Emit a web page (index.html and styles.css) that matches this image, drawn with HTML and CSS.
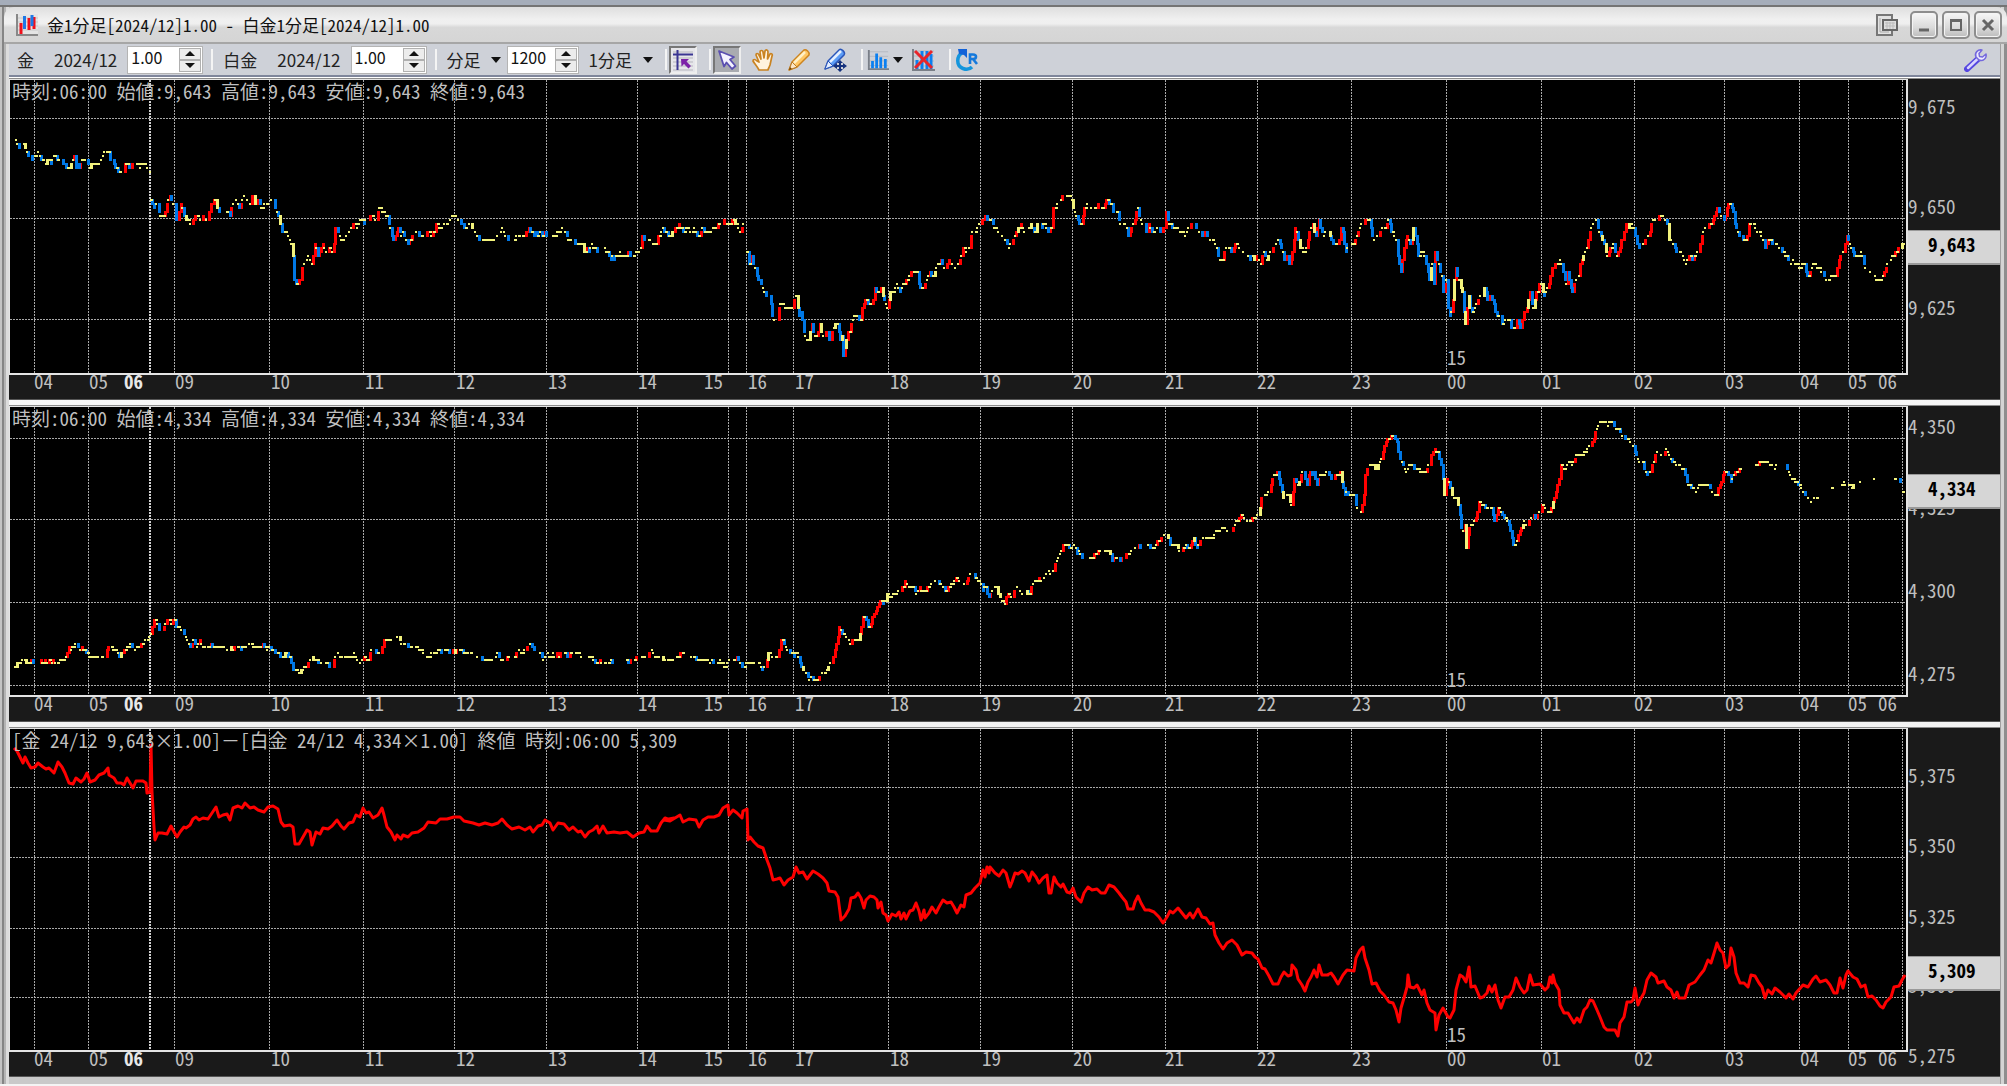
FILE: index.html
```html
<!DOCTYPE html>
<html lang="ja">
<head>
<meta charset="utf-8">
<title>金1分足[2024/12]1.00 - 白金1分足[2024/12]1.00</title>
<link rel="stylesheet" href="styles.css">
</head>
<body>
<main class="window">
  <header class="titlebar">
    <svg class="app-icon" viewBox="0 0 22 22" aria-hidden="true">
      <rect width="22" height="22" fill="#e4e4e4"/>
      <path d="M1 4H22M1 8H22M1 12H22M1 16H22" stroke="#c8c8c8"/>
      <path d="M1 0V21H22" fill="none" stroke="#888" stroke-width="2"/>
      <path d="M5 9V20M13 4V16M18 3V15" stroke="#f0101c" stroke-width="3"/>
      <path d="M8.500 2V15M16 1V12" stroke="#1e78e6" stroke-width="3"/>
    </svg>
    <h1 class="title">金1分足[2024/12]1.00 - 白金1分足[2024/12]1.00</h1>
    <button class="detach" aria-label="別ウィンドウ">
      <svg width="22" height="22" viewBox="0 0 22 22"><path d="M1 1H16V21H1Z" fill="#e2e2e2" stroke="#777" stroke-width="2"/><path d="M4 4V18H13" fill="none" stroke="#aaa" stroke-width="1"/><rect x="7" y="6" width="14" height="10" fill="#ddd" stroke="#666" stroke-width="2"/><path d="M9 9H19M9 12H19M11 8V15M14 8V15M17 8V15" stroke="#bbb"/></svg>
    </button>
    <button class="win-btn" aria-label="最小化"><svg width="14" height="14" viewBox="0 0 14 14"><path d="M2 12H12" stroke="#666" stroke-width="3"/></svg></button>
    <button class="win-btn" aria-label="最大化"><svg width="14" height="14" viewBox="0 0 14 14"><rect x="2" y="3" width="10" height="9" fill="none" stroke="#666" stroke-width="2"/><path d="M1 2.500H13" stroke="#666" stroke-width="3"/></svg></button>
    <button class="win-btn" aria-label="閉じる"><svg width="14" height="14" viewBox="0 0 14 14"><path d="M2 2L12 12M12 2L2 12" stroke="#666" stroke-width="3"/></svg></button>
  </header>

  <div class="frame">
    <nav class="toolbar" aria-label="チャート設定">
      <label for="ratio-a">金</label><span class="contract">2024/12</span>
      <span class="spin"><input id="ratio-a" value="1.00"><span class="steps"><button class="up" aria-label="増やす"></button><button class="down" aria-label="減らす"></button></span></span>
      <i class="sep"></i>
      <label for="ratio-b">白金</label><span class="contract">2024/12</span>
      <span class="spin"><input id="ratio-b" value="1.00"><span class="steps"><button class="up" aria-label="増やす"></button><button class="down" aria-label="減らす"></button></span></span>
      <i class="sep"></i>
      <span class="drop"><select class="kind" aria-label="足種"><option>分足</option></select></span>
      <span class="spin count"><input aria-label="本数" value="1200"><span class="steps"><button class="up" aria-label="増やす"></button><button class="down" aria-label="減らす"></button></span></span>
      <span class="drop interval"><select aria-label="足の間隔"><option>1分足</option></select></span>
      <i class="sep tight"></i>
      <button class="tool on light" aria-label="十字線">
        <svg width="22" height="22" viewBox="0 0 22 22"><path d="M1 3H21M1 9H21M1 13H21M1 17H21M1 21H21" stroke="#b5b5bd"/><path d="M1 5.500H21M5.500 1V21" stroke="#3a3592" stroke-width="2"/><path d="M9 10H17L14.500 12.500L19 17L16.500 19.500L12 15L9.500 17.500Z" fill="#7c22a8"/></svg>
      </button>
      <i class="sep tight"></i>
      <div class="tools">
        <button class="tool on" aria-label="選択"><svg width="22" height="22" viewBox="0 0 22 22"><path d="M3 2L18 8L14 10.500L19.500 17L16 20L10.500 13.500L8 17.500Z" fill="#f4f2ff" stroke="#5a4fb0" stroke-width="1.800" stroke-linejoin="round"/></svg></button>
        <button class="tool" aria-label="移動"><svg width="24" height="24" viewBox="0 0 24 24"><path d="M8 22C6 18 3 15 2 13C2 11 4 11 6 13L8 14L5 7C5 5 7 5 8 7L10 11L9 4C9 2 12 2 12 4L13 10L14 3C15 1 17 2 17 4L16.500 11L19 6C20 5 22 6 21 8L19 17C18 20 17 21 17 22Z" fill="#fff3df" stroke="#c98322" stroke-width="1.700" stroke-linejoin="round"/></svg></button>
        <button class="tool" aria-label="描画"><svg width="24" height="24" viewBox="0 0 24 24"><path d="M2 22L5 14L17 2C19 1 23 4 22 7L10 19Z" fill="#ffc766" stroke="#cc8420" stroke-width="1.500" stroke-linejoin="round"/><path d="M7 15L18 4" stroke="#fff0c8" stroke-width="2.500"/><path d="M5 14L10 19L2 22Z" fill="#fbe6c8" stroke="#b97a26"/><path d="M2 22L3 19L5 21Z" fill="#774400"/></svg></button>
        <button class="tool" aria-label="描画の編集"><svg width="24" height="24" viewBox="0 0 24 24"><path d="M2 21L5 13L16 2C18 0 23 4 21 7L10 18Z" fill="#5c9cf5" stroke="#2a55b8" stroke-width="1.500" stroke-linejoin="round"/><path d="M7 14L18 3" stroke="#e4efff" stroke-width="2.500"/><path d="M5 13L10 18L2 21Z" fill="#e3edff" stroke="#2a55b8"/><path d="M17 12L20 15H18V17H20V15L24 18L20 21V19H18V21H20L17 24L14 21H16V19H14V21L10 18L14 15V17H16V15H14Z" fill="#15327e"/></svg></button>
      </div>
      <i class="sep tight"></i>
      <button class="tool menu" aria-label="テクニカル指標"><svg width="24" height="24" viewBox="0 0 24 24"><path d="M2 3H23M2 8H23M2 13H23M2 18H23" stroke="#b3b8c0"/><path d="M2 1V22H24" fill="none" stroke="#7a7f88" stroke-width="2"/><path d="M6 13V21M10.500 5V21M15 9V21M20 11V21" stroke="#0b7ff0" stroke-width="3"/></svg></button>
      <button class="tool clear" aria-label="指標を消去"><svg width="24" height="24" viewBox="0 0 24 24"><path d="M2 3H23M2 8H23M2 13H23M2 18H23" stroke="#b3b8c0"/><path d="M2 1V22H24" fill="none" stroke="#7a7f88" stroke-width="2"/><path d="M6 12V21M11 3V21M16 3V21M20 6V21" stroke="#0b7ff0" stroke-width="3"/><path d="M4 3L21 20M21 3L4 20" stroke="#e8242a" stroke-width="3"/></svg></button>
      <i class="sep tight"></i>
      <button class="tool" aria-label="再読込"><svg width="24" height="24" viewBox="0 0 24 24"><path d="M8 4C1 8 1 18 8 20.500C12 22 15 21 17 19" fill="none" stroke="#1495dc" stroke-width="3.500"/><path d="M3 1H12V10L9 7L4 6Z" fill="#1262d8"/><path d="M15 16V6.500H18C22 6.500 22 11 18 11H15M18 11L22 16" fill="none" stroke="#1579dc" stroke-width="2.600"/></svg></button>
      <button class="tool settings" aria-label="設定"><svg width="24" height="24" viewBox="0 0 24 24"><path d="M3 21L14 11" stroke="#5546e0" stroke-width="6" stroke-linecap="round"/><path d="M4 20L14 10.500" stroke="#d9d4ff" stroke-width="2.500" stroke-linecap="round"/><path d="M18 2C14 1 10 5 12 9L15 12C19 14 23 10 22 6L18.500 9L15.500 8.500L15 5.500Z" fill="#eeebff" stroke="#7468dd" stroke-width="1.500" stroke-linejoin="round"/></svg></button>
    </nav>

    <section class="charts">
      <article class="panel" id="gold">
        <div class="plot"><p class="readout">時刻:06:00 始値:9,643 高値:9,643 安値:9,643 終値:9,643</p></div>
        <div class="times"></div>
        <div class="prices"><strong class="tag">9,643</strong></div>
      </article>
      <article class="panel" id="platinum">
        <div class="plot"><p class="readout">時刻:06:00 始値:4,334 高値:4,334 安値:4,334 終値:4,334</p></div>
        <div class="times"></div>
        <div class="prices"><strong class="tag">4,334</strong></div>
      </article>
      <article class="panel" id="spread">
        <div class="plot"><p class="readout">[金 24/12 9,643×1.00]<span class="wide">－</span>[白金 24/12 4,334×1.00] 終値 時刻:06:00 5,309</p></div>
        <div class="times"></div>
        <div class="prices"><strong class="tag">5,309</strong></div>
      </article>
    </section>
  </div>
</main>
<script src="charts.js"></script>
</body>
</html>
```
FILE: styles.css
```css
* { box-sizing: border-box; }

body {
  margin: 0;
  min-height: 100vh;
  display: flex;
  flex-direction: column;
  padding-top: 5px;
  background: #a5adba;
  color: #111;
  font-family: "Noto Sans CJK JP", sans-serif;
  font-size: 17px;
  line-height: 24px;
}

button, input, select { font: inherit; color: inherit; }
button { border: 0; padding: 0; background: none; }

.window {
  flex: 1;
  display: flex;
  flex-direction: column;
  border-top: 2px solid #747474;
  border-bottom: 2px solid #f4f4f4;
  background: linear-gradient(90deg, #c4c4c4 0 2px, #858585 2px 4px, #b4b4b4 4px 6px, #dcdcdc 6px 9px, #c9c9c9 9px calc(100% - 7px), #a0a0a0 calc(100% - 7px) calc(100% - 6px), #d4d4d4 calc(100% - 6px) calc(100% - 3px), #8e8e8e calc(100% - 3px));
}

.titlebar {
  display: flex;
  align-items: center;
  gap: 4px;
  height: 37px;
  margin-left: 4px;
  padding: 0 5px 0 12px;
  border-bottom: 2px solid #a6a6a6;
  border-radius: 10px 10px 0 0;
  background: linear-gradient(#dedede, #f0f0f0 35%, #efefef 48%, #d8d8d8 58%, #d5d5d5);
}
.app-icon { width: 22px; height: 22px; }
.title {
  flex: 1;
  margin: 0 0 0 5px;
  font-size: 17px;
  font-weight: 400;
  font-feature-settings: "hwid";
}
.detach { display: flex; margin-right: 8px; }
.win-btn {
  display: grid;
  place-items: center;
  width: 28px;
  height: 28px;
  border: 2px solid #8d8d8d;
  border-radius: 5px;
  background: linear-gradient(#f6f6f6, #dadada 60%, #bcbcbc);
  box-shadow: inset 0 0 0 1px #f4f4f4;
}

.frame {
  flex: 1;
  display: flex;
  flex-direction: column;
  padding: 0 7px 8px 9px;
}

.toolbar {
  display: flex;
  align-items: center;
  height: 35px;
  padding: 0 10px 2px 8px;
  border-bottom: 2px solid #fff;
  background: linear-gradient(#ced1d8 0 31px, #7f869b 31px 33px);
  color: #222;
}
.contract { margin-left: 20px; }
.spin {
  display: flex;
  width: 76px;
  height: 28px;
  margin-left: 10px;
  border: 1px solid #b4b4b4;
  background: #fff;
  font-size: 16px;
}
.spin input {
  flex: 1;
  min-width: 0;
  border: 0;
  padding: 0 0 5px 3px;
  background: none;
  color: #111;
  outline: 0;
}
.spin.count { width: 72px; margin-left: 6px; }
.steps { display: flex; flex-direction: column; width: 23px; padding: 1px 1px 1px 0; }
.steps button {
  flex: 1;
  display: grid;
  place-items: center;
  border: 1px solid #b0b0b0;
  background: #ececec;
}
.up::before, .down::before, .drop::after, .menu::after {
  content: "";
  border: 5px solid transparent;
}
.up::before { border-width: 0 5px 5px; border-bottom-color: #111; }
.down::before { border-width: 5px 5px 0; border-top-color: #111; }
.sep { width: 2px; height: 21px; margin: 0 10px 0 8px; background: #f4f4f4; }
.sep.tight { margin: 0 2px 0 12px; }
.drop { display: flex; align-items: center; gap: 10px; }
.drop::after, .menu::after { border-width: 6px 5px 0; border-top-color: #111; }
.drop select {
  appearance: none;
  border: 0;
  padding: 0;
  background: none;
  outline: 0;
}
.drop.interval { margin-left: 10px; }
.tools { display: flex; gap: 8px; }
.tool {
  display: grid;
  place-items: center;
  width: 28px;
  height: 28px;
  flex: none;
}
.tool.on { border: 2px solid; border-color: #777 #eee #eee #777; background: #a9abb0; }
.tool.on.light { background: #e6e6ea; }
.tool.menu { display: flex; align-items: center; gap: 4px; width: 38px; padding-left: 2px; }
.tool.clear { margin-left: 6px; }
.settings { margin-left: auto; }

.charts {
  flex: 1;
  display: grid;
  grid-template-rows: minmax(160px, 320fr) minmax(160px, 315fr) minmax(160px, 348fr);
  gap: 7px;
  background: linear-gradient(#fafafa, #f0f0f0);
}
.panel {
  display: grid;
  grid-template-columns: minmax(0, 1fr) 92px;
  grid-template-rows: minmax(0, 1fr) 24px;
  background: #1a1a1a;
  color: #bfbfbf;
  font-size: 19px;
  line-height: 20px;
  font-feature-settings: "hwid";
  box-shadow: 0 1px #555, 0 -1px #8c8c8c;
}
.plot {
  position: relative;
  border: solid #e4e4e4;
  border-width: 1px 2px 2px 1px;
  background: #000;
  overflow: hidden;
}
.plot svg { position: absolute; inset: 0; width: 100%; height: 100%; }
.readout { position: relative; margin: 1px 2px; white-space: pre; }
.wide { font-feature-settings: normal; }
.times { position: relative; }
.prices { position: relative; grid-column: 2; grid-row: 1 / 3; overflow: hidden; }
.mark { position: absolute; white-space: nowrap; }
.times .mark { top: -4px; }
.times .session { font-weight: 700; color: #e8e8e8; }
.plot .day { bottom: 6px; }
.prices .mark { left: 0; margin-top: -22px; }
.tag {
  position: absolute;
  z-index: 1;
  left: 0;
  right: 0;
  height: 35px;
  padding: 3px 0 0 20px;
  border: solid #999;
  border-width: 1px 0 2px;
  background: #d6d6d6;
  color: #000;
}

.grid { fill: none; stroke: #a8a8a8; stroke-dasharray: 2 1; }
.grid-session { stroke: #d0d0d0; stroke-width: 2; }
.rise { fill: #ff0000; }
.fall { fill: #0078e6; }
.flat { fill: #f2f27c; }
.line { fill: none; stroke: #ff0000; stroke-width: 3; stroke-linejoin: round; }
```
FILE: charts.js
```js
// Series are stored in three horizontal blocks; "/" starts a new session.
const BLOCK_X = [0, 660, 1327];
const UNIT_X = 680 / 1568;
const UNIT_Y = 1 / 3;
const LEFT = 10, WIDTH = 1896;

const hours = [
  [34, '04', 35], [88, '05', 90], [150, '06', 125, 'session'], [174, '09', 176], [269, '10', 272],
  [363, '11', 366], [454, '12', 457], [546, '13', 549], [637, '14', 639], [728, '15', 705],
  [746, '16', 749], [793, '17', 796], [888, '18', 891], [980, '19', 983], [1072, '20', 1074],
  [1165, '21', 1166], [1257, '22', 1258], [1351, '23', 1353], [1446, '00', 1448], [1541, '01', 1543],
  [1634, '02', 1635], [1724, '03', 1726], [1799, '04', 1801], [1848, '05', 1849], [1902, '06', 1879]
];

const panels = [
  {
    id: 'gold', top: 79, height: 320, plot: 293, origin: 80, tick: 4, tag: 230,
    prices: [[118, '9,675'], [218, '9,650'], [319, '9,625']],
    data: [
      `33 165 37 183 44 200 50 212 56 195 62 212 70 232 78 236 88 215 98 240 105 250 112 240 118 250 126 215 130 237 138 237 146 250 152 262 158 262 164 258 170 222 174 258 182 258 190 236 200 238 207 268 214 250 230 250 238 218 250 218 256 236 264 258 270 272 282 280 288 250 300 260 312 250 322 260 332 250 340 265 346 275 / 348 355 353 390 358 365 364 380 370 410 376 410 383 385 390 348 396 365 402 370 406 420 412 415 417 370 422 395 428 418 436 420 441 435 447 410 452 400 460 415 465 422 470 400 478 422 484 380 488 375 495 350 500 385 507 400 514 390 520 400 524 385 529 412 535 370 545 365 552 378 560 355 567 345 575 370 582 345 590 375 597 360 602 385 612 372 620 375 626 358 631 360 634 385 642 405 648 460 655 450 662 465 668 485 674 495 677 600 684 618 688 590 692 600 698 560 706 540 712 520 718 560 726 490 732 520 738 520 744 490 752 518 760 505 768 520 771 440 778 435 782 470 792 485 800 465 808 460 814 420 824 440 830 420 838 430 845 415 858 410 866 420 875 385 884 400 892 410 900 440 906 485 912 460 918 445 924 470 930 455 938 488 946 480 955 465 960 445 968 470 975 475 985 460 998 465 1006 430 1014 450 1024 435 1034 425 1042 410 1048 400 1055 420 1064 430 1075 450 1085 430 1095 450 1105 478 1125 480 1145 478 1158 445 1165 465 1172 485 1185 480 1192 465 1205 470 1220 445 1226 460 1255 462 1262 470 1280 465 1290 460 1298 440 1304 460 1312 485 1325 488 1342 490 1345 512 1358 512 1365 490 1372 510 1382 520 1392 505 1400 520 1410 535 1420 530 1430 520 1440 535 1450 520 1458 530 1468 520 1476 510 1482 470 1490 485 1502 480 1512 495 1520 465 1530 450 1540 465 1550 460 1564 435`,
      `0 465 10 450 16 465 25 470 40 430 48 445 56 455 62 440 68 460 80 445 88 475 98 445 106 458 118 460 128 440 140 430 150 422 160 435 170 420 178 435 185 455 192 430 198 445 / 201 520 205 560 212 530 220 575 226 595 234 610 242 645 252 650 260 710 270 718 276 665 282 670 292 685 300 690 308 680 313 640 318 700 326 700 332 760 342 780 350 735 356 775 362 765 368 735 374 775 385 750 392 790 400 745 408 725 414 780 419 770 422 835 426 800 432 760 440 740 450 700 458 720 464 710 468 670 476 662 484 670 492 660 494 615 500 640 510 630 518 665 525 680 530 640 540 630 546 615 554 632 562 610 572 595 580 575 592 570 598 620 606 625 616 600 622 580 628 600 636 560 646 545 658 570 664 545 672 545 680 570 690 540 697 520 699 490 706 515 712 515 716 465 726 460 734 440 742 425 748 408 754 425 762 420 770 440 780 455 790 460 796 480 802 502 812 485 820 470 826 445 833 430 840 460 848 455 856 435 864 455 872 430 880 440 888 430 896 460 902 440 905 385 912 390 920 370 928 350 936 345 945 350 950 370 956 395 966 430 974 420 978 385 986 370 995 385 1005 385 1015 370 1022 385 1030 355 1038 370 1045 400 1054 390 1062 440 1074 425 1080 465 1088 445 1094 415 1102 385 1106 415 1114 430 1122 460 1128 430 1136 460 1146 445 1156 460 1164 440 1166 400 1172 420 1180 442 1195 442 1205 460 1212 460 1220 440 1232 430 1240 445 1248 460 1262 462 1275 485 1282 500 1288 540 1298 542 1302 510 1312 505 1320 515 1330 492 1340 505 1350 515 1360 540 1370 535 1378 530 1384 555 1390 510 1398 540 1406 520 1416 505 1427 475 1434 515 1440 545 1446 525 1452 555 1458 510 1466 430 1474 500 1486 525 1492 485 1504 430 1512 470 1520 420 1528 470 1540 445 1550 490 1560 500`,
      `4 445 12 485 20 500 30 480 33 430 42 520 50 500 58 500 68 475 76 445 86 420 98 420 104 465 110 480 118 465 126 445 136 440 142 420 148 455 158 465 164 540 170 580 178 500 184 470 194 490 200 440 206 490 212 540 220 510 228 550 236 600 242 540 247 620 250 520 258 560 266 590 268 640 275 590 280 700 288 700 293 600 298 565 304 600 312 640 318 750 326 640 332 705 340 690 350 650 358 655 364 625 370 660 376 640 382 665 390 710 398 700 405 740 412 720 418 712 425 745 434 750 438 725 446 740 452 700 460 690 468 640 474 690 484 635 493 610 500 655 506 625 514 600 520 560 530 560 538 545 545 580 550 615 556 575 564 640 572 600 580 590 584 555 592 525 600 500 606 450 612 435 622 425 628 460 636 480 645 530 652 510 660 490 667 535 674 500 684 470 690 430 698 455 706 425 712 475 720 510 730 490 740 470 752 420 762 415 772 405 782 415 788 480 798 490 808 515 818 520 826 555 836 520 842 540 850 520 858 515 862 470 872 440 880 440 892 415 898 385 906 400 912 410 916 420 925 368 934 385 940 430 948 460 958 475 966 485 974 430 984 440 990 455 1004 465 1010 515 1016 480 1030 490 1044 502 1056 525 1068 545 1080 550 1090 565 1098 550 1104 580 1110 595 1118 565 1124 550 1134 565 1142 575 1150 602 1162 590 1174 585 1180 540 1190 520 1198 470 1208 505 1216 525 1232 520 1240 560 1248 570 1258 575 1266 598 1276 602 1284 580 1290 565 1298 545 1306 525 1316 510 1328 485 1330 500`
    ]
  },
  {
    id: 'platinum', top: 406, height: 315, plot: 288, origin: 400, viewTop: 407, tick: 3.3, tag: 474,
    prices: [[438, '4,350'], [519, '4,325'], [602, '4,300'], [685, '4,275']],
    data: [
      `32 800 44 790 55 780 62 790 72 782 85 790 100 785 115 782 130 790 145 780 155 768 157 740 168 745 176 730 184 745 195 748 205 768 222 772 242 770 248 740 268 748 276 770 284 755 292 740 300 730 306 748 320 740 334 722 345 712 350 690 356 655 362 665 366 685 374 692 380 670 388 665 396 670 402 660 406 682 418 690 425 705 432 725 440 740 446 715 452 745 463 720 466 745 476 745 486 730 492 745 505 745 514 735 522 748 536 745 550 745 566 740 576 730 586 740 600 742 606 732 614 745 626 748 636 760 648 770 656 760 668 775 676 810 690 818 700 800 710 800 716 775 730 780 740 790 755 790 764 800 772 770 780 760 790 775 800 765 808 775 816 760 830 790 840 770 848 782 855 750 870 758 880 755 886 715 896 725 908 722 918 712 928 732 945 740 960 742 972 750 988 775 1000 758 1030 755 1040 758 1060 750 1078 760 1095 762 1110 780 1125 780 1140 780 1146 762 1152 778 1165 775 1185 770 1195 755 1205 762 1222 732 1232 750 1242 750 1252 775 1262 765 1280 768 1295 760 1310 768 1320 765 1330 758 1340 772 1365 772 1375 788 1390 785 1400 792 1415 782 / 1445 785 1455 780 1470 772 1490 770 1502 755 1510 770 1530 775 1545 782 1560 778`,
      `0 775 12 780 25 785 40 770 56 762 66 760 80 775 95 780 120 785 138 785 150 800 158 785 178 775 192 800 200 785 225 790 234 808 242 800 250 760 262 770 272 765 280 720 290 740 300 755 308 770 316 760 325 800 335 815 345 835 355 840 365 832 378 820 388 800 396 785 402 755 408 720 414 685 422 700 430 710 438 730 448 712 456 720 462 690 469 645 476 665 480 690 486 665 494 640 500 620 508 600 516 610 524 570 530 600 538 580 550 572 562 560 565 545 572 562 585 565 592 585 598 560 604 575 616 565 628 550 640 545 650 560 662 568 670 555 680 540 684 525 690 540 705 550 716 520 726 530 738 545 744 570 750 560 756 590 766 570 778 568 790 605 796 605 803 575 810 595 820 570 828 565 834 580 846 575 854 580 858 555 870 535 880 540 892 520 906 515 914 485 922 465 930 435 936 430 944 445 956 435 962 460 970 460 976 480 986 465 996 475 1006 460 1014 450 1022 460 1034 450 1040 480 1050 470 1064 480 1075 465 1090 450 1104 438 1120 440 1138 442 1148 425 1158 410 1166 400 1176 430 1190 440 1200 450 1212 435 1222 445 1230 410 1236 445 1244 430 1256 410 1270 415 1280 400 1296 388 1310 392 1320 390 1328 365 1338 345 1348 350 1358 368 1368 355 1380 345 1386 300 1396 285 1404 275 1410 240 1418 220 1426 225 1432 265 1440 305 1448 280 1456 320 1462 230 1466 240 1470 255 1480 215 1486 218 1492 260 1496 220 1508 218 1514 255 1520 222 1530 225 1538 212 1548 240 1558 228 1564 215`,
      `0 210 8 240 20 225 30 218 40 285 48 278 56 285 62 285 68 320 78 330 84 300 87 230 96 200 104 190 110 210 118 200 128 160 134 125 142 120 148 105 156 110 162 130 166 175 174 190 184 220 192 190 200 205 210 205 216 222 228 210 238 195 242 160 248 145 256 165 264 200 270 285 276 230 284 255 290 295 300 290 304 330 312 400 317 365 321 455 326 380 336 375 344 350 350 300 360 320 370 325 378 320 386 360 396 320 406 350 418 365 424 400 432 440 440 405 448 385 456 365 462 380 470 355 480 350 492 330 496 315 506 325 512 340 520 310 528 280 534 240 540 190 548 210 556 190 566 195 574 165 586 165 598 150 610 130 618 100 624 75 636 68 646 75 658 68 664 85 676 95 688 115 698 125 706 135 712 165 720 185 728 190 736 225 744 225 748 200 756 175 762 150 772 165 782 150 790 165 800 190 812 195 824 215 830 248 840 268 852 268 862 258 878 258 890 275 898 288 906 250 914 225 922 215 932 245 942 218 956 205 966 205 / 985 195 1000 190 1014 188 1030 200 1046 195 1058 195 1064 220 1080 245 1092 258 1100 280 1112 300 1122 300 1136 292 / 1164 265 1166 265 / 1188 248 1210 258 1228 250 / 1258 245 1268 222 / 1306 238 1318 235 1322 250 / 1329 275 1331 275`
    ]
  },
  {
    id: 'spread', top: 728, height: 348, plot: 321, origin: 720, viewTop: 729, tag: 956, line: true,
    prices: [[787, '5,375'], [857, '5,350'], [928, '5,325'], [997, '5,300'], [1067, '5,275']],
    data: [
      `33 85 40 92 46 110 52 128 58 110 64 130 72 145 80 142 88 128 98 140 106 148 114 145 124 160 134 125 142 140 150 158 158 190 168 192 176 175 186 185 194 178 200 158 208 185 220 180 228 165 240 158 248 145 252 165 262 175 270 190 280 190 286 195 292 175 300 190 307 205 314 182 330 182 336 190 340 220 346 215 349 75 351 215 354 320 358 360 364 340 374 340 386 342 394 318 400 330 408 352 416 335 424 322 430 325 438 315 444 298 452 290 458 300 468 295 480 298 488 280 497 260 504 290 514 285 524 282 530 300 537 265 548 258 558 265 566 250 576 265 586 262 596 270 608 275 618 262 630 258 640 268 648 305 656 318 668 315 676 320 680 372 690 372 698 350 708 330 714 335 720 375 728 335 738 342 744 325 756 328 766 318 776 300 786 318 794 328 804 308 814 305 822 285 830 290 836 265 844 280 852 275 860 295 872 285 880 265 886 285 892 320 902 335 910 360 916 345 924 358 930 345 940 352 950 340 965 335 978 325 988 305 1005 308 1015 298 1030 298 1047 292 1060 290 1070 302 1090 308 1105 315 1118 310 1135 315 1148 308 1158 298 1170 315 1180 328 1196 322 1210 330 1222 322 1230 335 1240 318 1250 315 1256 300 1268 308 1275 330 1286 308 1300 312 1312 330 1322 322 1332 335 1340 332 1348 350 1358 335 1368 330 1376 318 1382 338 1390 318 1400 340 1416 335 1430 338 1445 335 1460 350 1474 340 1486 335 1492 318 1502 332 1514 332 1524 310 1534 295 1544 300 1555 295`,
      `10 300 22 302 34 295 46 285 54 305 66 298 82 300 90 320 98 300 110 290 124 292 136 285 146 265 156 255 160 285 168 270 178 280 188 295 192 272 200 268 203 360 208 350 216 365 226 378 238 385 246 420 254 445 260 480 270 478 276 475 286 495 296 480 306 472 313 440 320 460 330 455 338 478 346 465 352 452 364 462 376 475 384 490 390 512 404 515 410 530 414 575 418 600 426 588 436 568 440 535 450 530 457 518 464 535 470 565 476 540 484 528 494 530 500 540 502 565 510 545 514 580 520 585 526 602 534 582 544 588 550 575 556 598 562 580 568 598 576 572 584 570 590 550 598 572 602 600 608 570 612 595 620 578 628 560 636 578 644 560 652 540 662 550 670 545 678 560 684 578 694 555 702 562 706 525 716 520 726 505 738 490 744 450 750 470 754 442 758 460 762 440 772 458 782 468 790 450 798 460 806 502 812 485 818 458 826 462 834 452 842 460 850 482 858 455 866 470 874 488 884 475 892 465 896 520 902 520 908 470 916 490 924 500 930 492 938 515 946 520 952 505 960 530 970 545 978 520 986 500 996 510 1008 508 1016 520 1026 520 1036 495 1048 500 1058 520 1066 530 1074 545 1080 568 1090 568 1096 545 1102 528 1108 550 1118 570 1128 570 1140 575 1150 592 1160 608 1168 590 1176 572 1184 580 1194 565 1204 578 1212 595 1222 580 1230 595 1240 568 1250 590 1260 595 1268 612 1274 610 1280 645 1288 670 1298 688 1308 668 1320 660 1330 675 1342 705 1352 695 1364 698 1372 712 1380 718 1388 745 1396 748 1404 768 1414 792 1424 792 1432 770 1440 755 1448 768 1454 765 1458 735 1466 750 1472 778 1480 795 1487 812 1494 785 1502 770 1508 750 1514 770 1520 735 1526 765 1540 765`,
      `0 765 10 760 16 770 26 792 36 765 46 750 62 752 68 715 76 690 83 680 88 715 96 750 104 792 114 790 122 812 132 825 142 845 152 850 160 870 165 905 170 865 178 835 184 800 187 765 192 800 200 805 208 795 218 825 224 810 230 850 238 870 248 880 252 930 258 885 268 865 278 890 284 895 292 870 298 810 306 765 314 770 320 785 327 742 332 800 342 798 352 835 360 830 368 820 374 798 380 815 388 795 394 840 402 865 410 830 420 830 428 810 436 775 444 800 454 820 462 810 467 765 474 795 490 792 502 810 510 802 514 770 518 790 520 765 526 790 534 810 538 855 546 880 556 880 562 895 570 910 576 895 584 905 592 870 600 860 606 840 614 842 622 870 630 890 638 920 646 930 664 930 670 948 676 910 684 890 692 845 700 845 706 840 710 805 716 855 722 840 730 820 738 780 746 760 758 770 764 790 776 782 784 800 794 810 800 835 806 815 812 835 826 835 834 795 848 785 860 765 870 750 878 720 886 730 894 690 900 668 906 690 912 700 920 745 926 735 932 685 938 710 944 760 952 788 962 790 970 802 978 765 988 768 996 790 1004 800 1010 835 1018 810 1026 822 1034 805 1044 815 1058 835 1066 822 1074 838 1082 820 1098 795 1110 802 1120 778 1128 768 1136 785 1150 780 1160 795 1170 820 1176 818 1184 775 1190 805 1196 765 1202 752 1212 770 1222 778 1232 800 1240 795 1248 830 1256 828 1266 840 1274 858 1282 865 1290 845 1300 830 1308 800 1318 798 1326 780 1332 765`
    ]
  }
];

let seed = 7;
const random = () => (seed = (seed * 16807) % 2147483647) / 2147483647;

// Splits the stored blocks into sessions of [x, y] points.
function sessions(panel) {
  const out = [[]];
  panel.data.forEach((block, i) => {
    const nums = block.trim().split(/\s+/);
    for (let k = 0; k < nums.length; k += 2) {
      if (nums[k] === '/') { out.push([]); k++; }
      out[out.length - 1].push([BLOCK_X[i] + nums[k] * UNIT_X, panel.origin + nums[k + 1] * UNIT_Y]);
    }
  });
  return out;
}

function candles(panel) {
  const d = { rise: '', fall: '', flat: '' };
  const add = (kind, x, y, w, h) => { d[kind] += `M${x} ${y}h${w}v${h}h${-w}z`; };
  for (const pts of sessions(panel)) {
    let i = 0, last = null;
    for (let x = pts[0][0]; x <= pts[pts.length - 1][0]; x += 1.575) {
      while (i < pts.length - 2 && pts[i + 1][0] < x) i++;
      const [a, b] = [pts[i], pts[i + 1]];
      const raw = a[1] + (b[1] - a[1]) * Math.min(1, (x - a[0]) / (b[0] - a[0]));
      const y = Math.round(Math.round((raw + (random() - 0.5) * 2) / panel.tick) * panel.tick);
      const px = Math.round(x);
      const move = last === null ? 0 : Math.abs(y - last);
      if (move === 0) {
        if (random() < 0.5) add('flat', px - 1, y - 1, 3, 2);
      } else if (move <= panel.tick + 1 && random() < 0.55) {
        add('flat', px - 1, y - 1, 2, 2);
      } else {
        const kind = random() < 0.12 ? 'flat' : y < last ? 'rise' : 'fall';
        add(kind, px - 1, Math.min(y, last) - 1, 3, move + 2);
      }
      last = y;
    }
  }
  return Object.entries(d).map(([k, v]) => `<path class="${k}" d="${v}"/>`).join('');
}

const mark = (text, side, pct, cls = '') =>
  `<span class="mark ${cls}" style="${side}:${pct.toFixed(3)}%">${text}</span>`;

for (const p of panels) {
  const el = document.getElementById(p.id);
  const top = p.viewTop || p.origin;
  let svg = `<svg viewBox="${LEFT} ${top} ${WIDTH} ${p.plot}" preserveAspectRatio="none" aria-hidden="true">`;
  for (const [y] of p.prices) svg += `<path class="grid" d="M${LEFT} ${y + 0.5}H${LEFT + WIDTH}"/>`;
  for (const [x, , , kind] of hours)
    svg += `<path class="grid ${kind ? 'grid-session' : ''}" d="M${x + (kind ? 0 : 0.5)} ${top}V${top + p.plot}"/>`;
  svg += p.line
    ? `<path class="line" d="M${sessions(p)[0].map(q => q.map(Math.round).join(' ')).join('L')}"/>`
    : candles(p);
  const plot = el.querySelector('.plot');
  plot.insertAdjacentHTML('afterbegin', svg + '</svg>');
  plot.insertAdjacentHTML('beforeend', mark('15', 'left', (1447 - LEFT) / WIDTH * 100, 'day'));
  el.querySelector('.times').innerHTML =
    hours.map(([, t, x, kind]) => mark(t, 'left', (x - 10) / 1899 * 100, kind)).join('');
  el.querySelector('.prices').insertAdjacentHTML('beforeend',
    p.prices.map(([y, t]) => mark(t, 'top', (y - p.top) / p.height * 100)).join(''));
  el.querySelector('.tag').style.top = ((p.tag - p.top) / p.height * 100).toFixed(3) + '%';
}
```
